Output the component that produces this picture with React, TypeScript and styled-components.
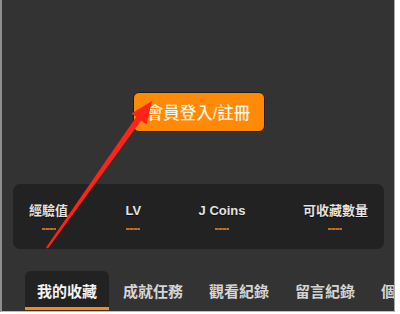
import React from "react";
import styled, { createGlobalStyle } from "styled-components";

const Global = createGlobalStyle`
  html, body { margin: 0; padding: 0; background: #ffffff; }
  body { font-family: "Liberation Sans", "Noto Sans CJK TC", sans-serif; }
`;

const Frame = styled.div`
  position: relative;
  box-sizing: border-box;
  width: 395px;
  height: 312px;
  background: #333333;
  border-left: 2px solid #8e8e8e;
  border-right: 1px solid #a8a8a8;
  border-bottom: 1px solid #bdbdbd;
  overflow: hidden;
  display: flex;
  flex-direction: column;
  align-items: stretch;
  padding-top: 92px;
`;

const LoginButton = styled.button`
  align-self: center;
  box-sizing: border-box;
  width: 132px;
  height: 40px;
  margin-left: 1px;
  background: #ff8a08;
  border: 1.5px solid #2c1a08;
  border-radius: 6px;
  color: #fff3e2;
  font-family: "Liberation Sans", "Noto Sans CJK TC", sans-serif;
  font-size: 16.5px;
  font-weight: 500;
  padding: 0;
  cursor: pointer;
`;

const StatsPanel = styled.div`
  margin: 52px 10px 0 11px;
  height: 65px;
  box-sizing: border-box;
  background: #222222;
  border-radius: 7px;
  padding: 19px 16px 0 16px;
  display: flex;
  justify-content: space-between;
  align-items: flex-start;
`;

const Stat = styled.div`
  display: flex;
  flex-direction: column;
  align-items: center;
  gap: 9px;
`;

const StatLabel = styled.span`
  font-family: "Liberation Sans", "Noto Sans CJK TC", sans-serif;
  font-size: 13px;
  line-height: 16px;
  font-weight: 700;
  color: #e2e2e2;
  text-shadow: 0 1px 1px rgba(0, 0, 0, 0.6);
`;

const StatDash = styled.span`
  display: block;
  width: 14px;
  height: 2px;
  background: repeating-linear-gradient(
    90deg,
    #b8702c 0 3px,
    #96592a 3px 4px
  );
`;

const Tabs = styled.div`
  margin-top: 22px;
  padding-left: 23px;
  display: flex;
  gap: 2px;
  white-space: nowrap;
`;

const Tab = styled.div<{ $active?: boolean }>`
  box-sizing: border-box;
  height: 39px;
  padding: 2px 12px 0;
  display: flex;
  align-items: center;
  font-family: "Liberation Sans", "Noto Sans CJK TC", sans-serif;
  font-size: 15px;
  font-weight: 700;
  color: ${(p) => (p.$active ? "#f4f4f4" : "#d4d4d4")};
  background: ${(p) => (p.$active ? "#222222" : "transparent")};
  border-radius: 6px 6px 0 0;
  border-bottom: 3px solid ${(p) => (p.$active ? "#ff8a08" : "transparent")};
  flex-shrink: 0;
`;

const ArrowLayer = styled.svg`
  position: absolute;
  left: -2px;
  top: 0;
  width: 400px;
  height: 314px;
  pointer-events: none;
`;

const stats = ["經驗值", "LV", "J Coins", "可收藏數量"];
const tabs = ["我的收藏", "成就任務", "觀看紀錄", "留言紀錄", "個人資料"];

export default function App() {
  return (
    <>
      <Global />
      <Frame>
        <LoginButton>會員登入/註冊</LoginButton>
        <StatsPanel>
          {stats.map((s) => (
            <Stat key={s}>
              <StatLabel>{s}</StatLabel>
              <StatDash />
            </Stat>
          ))}
        </StatsPanel>
        <Tabs>
          {tabs.map((t, i) => (
            <Tab key={t} $active={i === 0}>
              {t}
            </Tab>
          ))}
        </Tabs>
        <ArrowLayer viewBox="0 0 400 314">
          <polygon
            points="46,247.5 48,248.5 141.5,120 136.5,116.5"
            fill="#ff2418"
          />
          <polygon points="152,101 131.5,113.5 146.5,124.5" fill="#ff2418" />
        </ArrowLayer>
      </Frame>
    </>
  );
}
